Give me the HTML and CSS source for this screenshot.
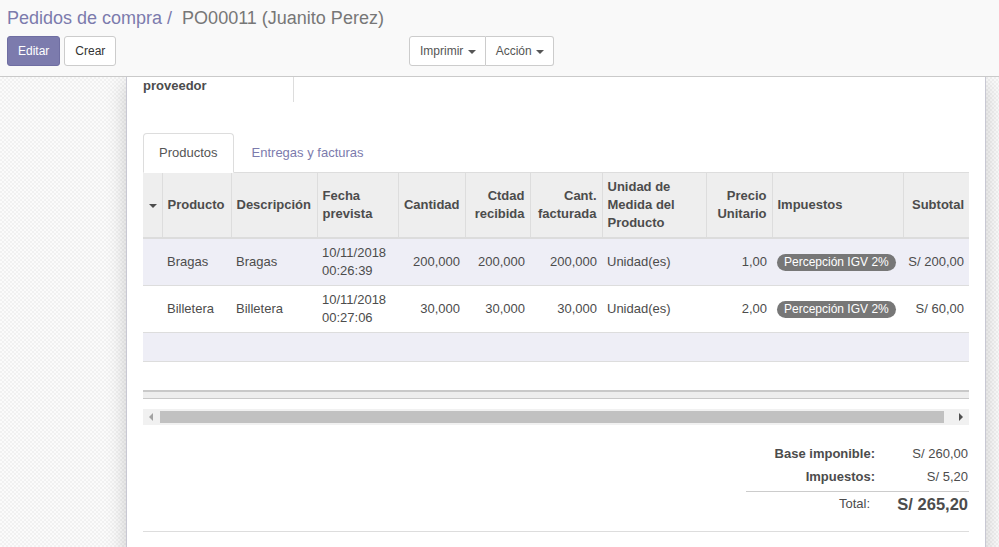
FILE: index.html
```html
<!DOCTYPE html>
<html lang="es">
<head>
<meta charset="utf-8">
<title>PO00011 (Juanito Perez)</title>
<link rel="stylesheet" href="styles.css">
</head>
<body>
<div class="app">
  <div class="cp">
    <div class="breadcrumb">
      <span class="bc-link">Pedidos de compra</span><span class="bc-sep">/</span><span class="bc-active">PO00011 (Juanito Perez)</span>
    </div>
    <div class="cp-row">
      <div class="cp-buttons">
        <button class="btn btn-primary">Editar</button>
        <button class="btn btn-default">Crear</button>
      </div>
      <div class="cp-sidebar">
        <div class="btn-group">
          <button class="btn btn-default btn-first">Imprimir <span class="caret"></span></button><button class="btn btn-default btn-last">Acción <span class="caret"></span></button>
        </div>
      </div>
    </div>
  </div>

  <div class="content">
    <div class="sheet">
      <div class="group">
        <div class="label-cell">proveedor</div>
      </div>

      <div class="nav-tabs">
        <div class="tab active">Productos</div>
        <div class="tab">Entregas y facturas</div>
      </div>

      <div class="table-wrap">
        <table class="list">
          <colgroup>
            <col class="c-sel"><col class="c-prod"><col class="c-desc"><col class="c-date"><col class="c-qty"><col class="c-rec"><col class="c-inv"><col class="c-uom"><col class="c-price"><col class="c-tax"><col class="c-sub">
          </colgroup>
          <thead>
            <tr>
              <th class="sel"><span class="sort-caret"></span></th>
              <th>Producto</th>
              <th>Descripción</th>
              <th>Fecha prevista</th>
              <th class="num">Cantidad</th>
              <th class="num">Ctdad recibida</th>
              <th class="num">Cant. facturada</th>
              <th>Unidad de Medida del Producto</th>
              <th class="num">Precio Unitario</th>
              <th>Impuestos</th>
              <th class="num">Subtotal</th>
            </tr>
          </thead>
          <tbody>
            <tr class="odd">
              <td></td>
              <td>Bragas</td>
              <td>Bragas</td>
              <td>10/11/2018 00:26:39</td>
              <td class="num">200,000</td>
              <td class="num">200,000</td>
              <td class="num">200,000</td>
              <td>Unidad(es)</td>
              <td class="num">1,00</td>
              <td><span class="badge">Percepción IGV 2%</span></td>
              <td class="num">S/&nbsp;200,00</td>
            </tr>
            <tr>
              <td></td>
              <td>Billetera</td>
              <td>Billetera</td>
              <td>10/11/2018 00:27:06</td>
              <td class="num">30,000</td>
              <td class="num">30,000</td>
              <td class="num">30,000</td>
              <td>Unidad(es)</td>
              <td class="num">2,00</td>
              <td><span class="badge">Percepción IGV 2%</span></td>
              <td class="num">S/&nbsp;60,00</td>
            </tr>
            <tr class="odd empty"><td colspan="11">&nbsp;</td></tr>
            <tr class="empty"><td colspan="11">&nbsp;</td></tr>
          </tbody>
          <tfoot>
            <tr><td colspan="11"></td></tr>
          </tfoot>
        </table>
      </div>

      <div class="hscroll">
        <div class="arrow-box"><span class="arrow-left"></span></div>
        <div class="track"><div class="thumb"></div></div>
        <div class="arrow-box"><span class="arrow-right"></span></div>
      </div>

      <div class="totals-wrap">
        <div class="totals">
          <div class="t-row">
            <div class="t-label">Base imponible:</div>
            <div class="t-value">S/ 260,00</div>
          </div>
          <div class="t-row">
            <div class="t-label">Impuestos:</div>
            <div class="t-value">S/ 5,20</div>
          </div>
          <div class="t-row t-total">
            <div class="t-label">Total:</div>
            <div class="t-value">S/ 265,20</div>
          </div>
        </div>
      </div>

      <div class="sheet-sep"></div>
    </div>
  </div>
</div>
</body>
</html>
```

FILE: styles.css
```css
html, body {
  margin: 0;
  padding: 0;
}
body {
  width: 999px;
  height: 547px;
  overflow: hidden;
  font-family: "Liberation Sans", Arial, sans-serif;
  font-size: 13px;
  color: #4c4c4c;
  background: #fff;
}
.app {
  display: flex;
  flex-direction: column;
  height: 547px;
}

/* Control panel */
.cp {
  background: #f9f9f9;
  border-bottom: 1px solid #cacaca;
  padding: 5px 7px 10px 7px;
}
.breadcrumb {
  font-size: 18px;
  line-height: 26px;
  height: 26px;
  white-space: nowrap;
}
.bc-link {
  color: #7c7bad;
}
.bc-sep {
  color: #7c7bad;
  padding: 0 10px 0 5px;
}
.bc-active {
  color: #777;
}
.cp-row {
  display: grid;
  grid-template-columns: 402px 1fr;
  margin-top: 5px;
  height: 30px;
}
.cp-buttons {
  display: flex;
  gap: 4px;
}
.btn {
  font-family: "Liberation Sans", Arial, sans-serif;
  font-size: 12px;
  line-height: 18px;
  height: 30px;
  padding: 5px 10px;
  border: 1px solid #ccc;
  border-radius: 3px;
  background: #fff;
  color: #333;
  box-sizing: border-box;
  cursor: pointer;
}
.btn-primary {
  background: #7c7bad;
  border-color: #6f6ea2;
  color: #fff;
}
.btn-group {
  display: flex;
}
.btn-group .btn {
  color: #555;
}
.btn-first {
  border-radius: 3px 0 0 3px;
  padding: 5px 9px 5px 10px;
}
.btn-last {
  border-radius: 0 3px 3px 0;
  border-left: 0;
  padding: 5px 9px 5px 10px;
}
.caret {
  display: inline-block;
  width: 0;
  height: 0;
  margin-left: 1px;
  vertical-align: middle;
  border-top: 4px solid #555;
  border-left: 4px solid transparent;
  border-right: 4px solid transparent;
}

/* Content */
.content {
  flex: 1;
  overflow: hidden;
  background-color: #f9f9f9;
  background-image: repeating-conic-gradient(#f1f1f1 0 25%, #fbfbfb 0 50%);
  background-size: 4px 4px;
}
.sheet {
  margin-left: 126px;
  width: 860px;
  box-sizing: border-box;
  min-height: 520px;
  background: #fff;
  border-left: 1px solid #c8c8d3;
  border-right: 1px solid #c8c8d3;
  box-shadow: 0 5px 20px -1px rgba(0, 0, 0, 0.2);
  padding: 0 16px;
}
.group {
  display: flex;
  height: 25px;
}
.label-cell {
  width: 150px;
  border-right: 1px solid #ddd;
  font-weight: bold;
  line-height: 18px;
}

/* Tabs */
.nav-tabs {
  display: flex;
  margin-top: 31px;
  border-bottom: 1px solid #ddd;
}
.tab {
  padding: 10px 15px;
  line-height: 18px;
  border: 1px solid transparent;
  border-radius: 4px 4px 0 0;
  margin-right: 2px;
  margin-bottom: -1px;
  color: #7c7bad;
}
.tab.active {
  color: #555;
  background: #fff;
  border-color: #ddd #ddd transparent #ddd;
}

/* List table */
.table-wrap {
  width: 826px;
  overflow: hidden;
}
.list {
  width: 826px;
  table-layout: fixed;
  border-collapse: collapse;
}
.c-sel { width: 19px; }
.c-prod { width: 69px; }
.c-desc { width: 86px; }
.c-date { width: 81px; }
.c-qty { width: 67px; }
.c-rec { width: 65px; }
.c-inv { width: 72px; }
.c-uom { width: 104px; }
.c-price { width: 66px; }
.c-tax { width: 131px; }
.c-sub { width: 66px; }

.list th {
  background: #eee;
  font-weight: bold;
  text-align: left;
  vertical-align: middle;
  line-height: 18px;
  padding: 5px 5px;
  height: 54px;
  border-left: 1px solid #ddd;
  border-bottom: 2px solid #dcdcdc;
  color: #4c4c4c;
}
.list th.sel {
  border-left: 0;
  padding: 5px 0 5px 6px;
}
.sort-caret {
  display: inline-block;
  width: 0;
  height: 0;
  vertical-align: middle;
  border-top: 4px solid #4c4c4c;
  border-left: 4px solid transparent;
  border-right: 4px solid transparent;
}
.list td {
  line-height: 18px;
  padding: 5px 5px;
  vertical-align: middle;
  border-top: 1px solid #ddd;
  white-space: normal;
}
.list .num {
  text-align: right;
}
.list tbody tr.odd td {
  background: #eeeef6;
}
.list tfoot td {
  background: #eee;
  border-top: 2px solid #c9c9c9;
  border-bottom: 1px solid #c9c9c9;
  padding: 0;
  height: 6px;
  line-height: 6px;
}
.badge {
  display: inline-block;
  background: #777;
  color: #fff;
  font-size: 12px;
  line-height: 17px;
  padding: 0 7px;
  border-radius: 9px;
  white-space: nowrap;
}

/* Horizontal scrollbar */
.hscroll {
  display: flex;
  width: 826px;
  height: 16px;
  margin-top: 10px;
  background: #f1f1f1;
}
.arrow-box {
  width: 16px;
  height: 16px;
  display: flex;
  align-items: center;
  justify-content: center;
}
.arrow-left {
  width: 0;
  height: 0;
  border-top: 4px solid transparent;
  border-bottom: 4px solid transparent;
  border-right: 4px solid #a3a3a3;
}
.arrow-right {
  width: 0;
  height: 0;
  border-top: 4px solid transparent;
  border-bottom: 4px solid transparent;
  border-left: 4px solid #505050;
}
.track {
  flex: 1;
  padding: 2px 0 2px 1px;
  box-sizing: border-box;
}
.thumb {
  width: 784px;
  height: 12px;
  background: #c1c1c1;
}

/* Totals */
.totals-wrap {
  display: flex;
  justify-content: flex-end;
  margin-top: 17px;
}
.totals {
  width: 223px;
}
.t-row {
  display: flex;
  height: 23px;
  line-height: 23px;
}
.t-label {
  width: 134px;
  text-align: right;
  padding-right: 5px;
  box-sizing: border-box;
  font-weight: bold;
}
.t-value {
  flex: 1;
  text-align: right;
  padding-right: 1px;
  white-space: nowrap;
}
.t-total {
  margin-top: 3px;
  border-top: 1px solid #ccc;
  height: 24px;
  line-height: 24px;
}
.t-total .t-label {
  font-weight: normal;
  padding-right: 10px;
}
.t-total .t-value {
  font-weight: bold;
  font-size: 16.5px;
}
.sheet-sep {
  margin-top: 15px;
  border-top: 1px solid #ddd;
}
```
